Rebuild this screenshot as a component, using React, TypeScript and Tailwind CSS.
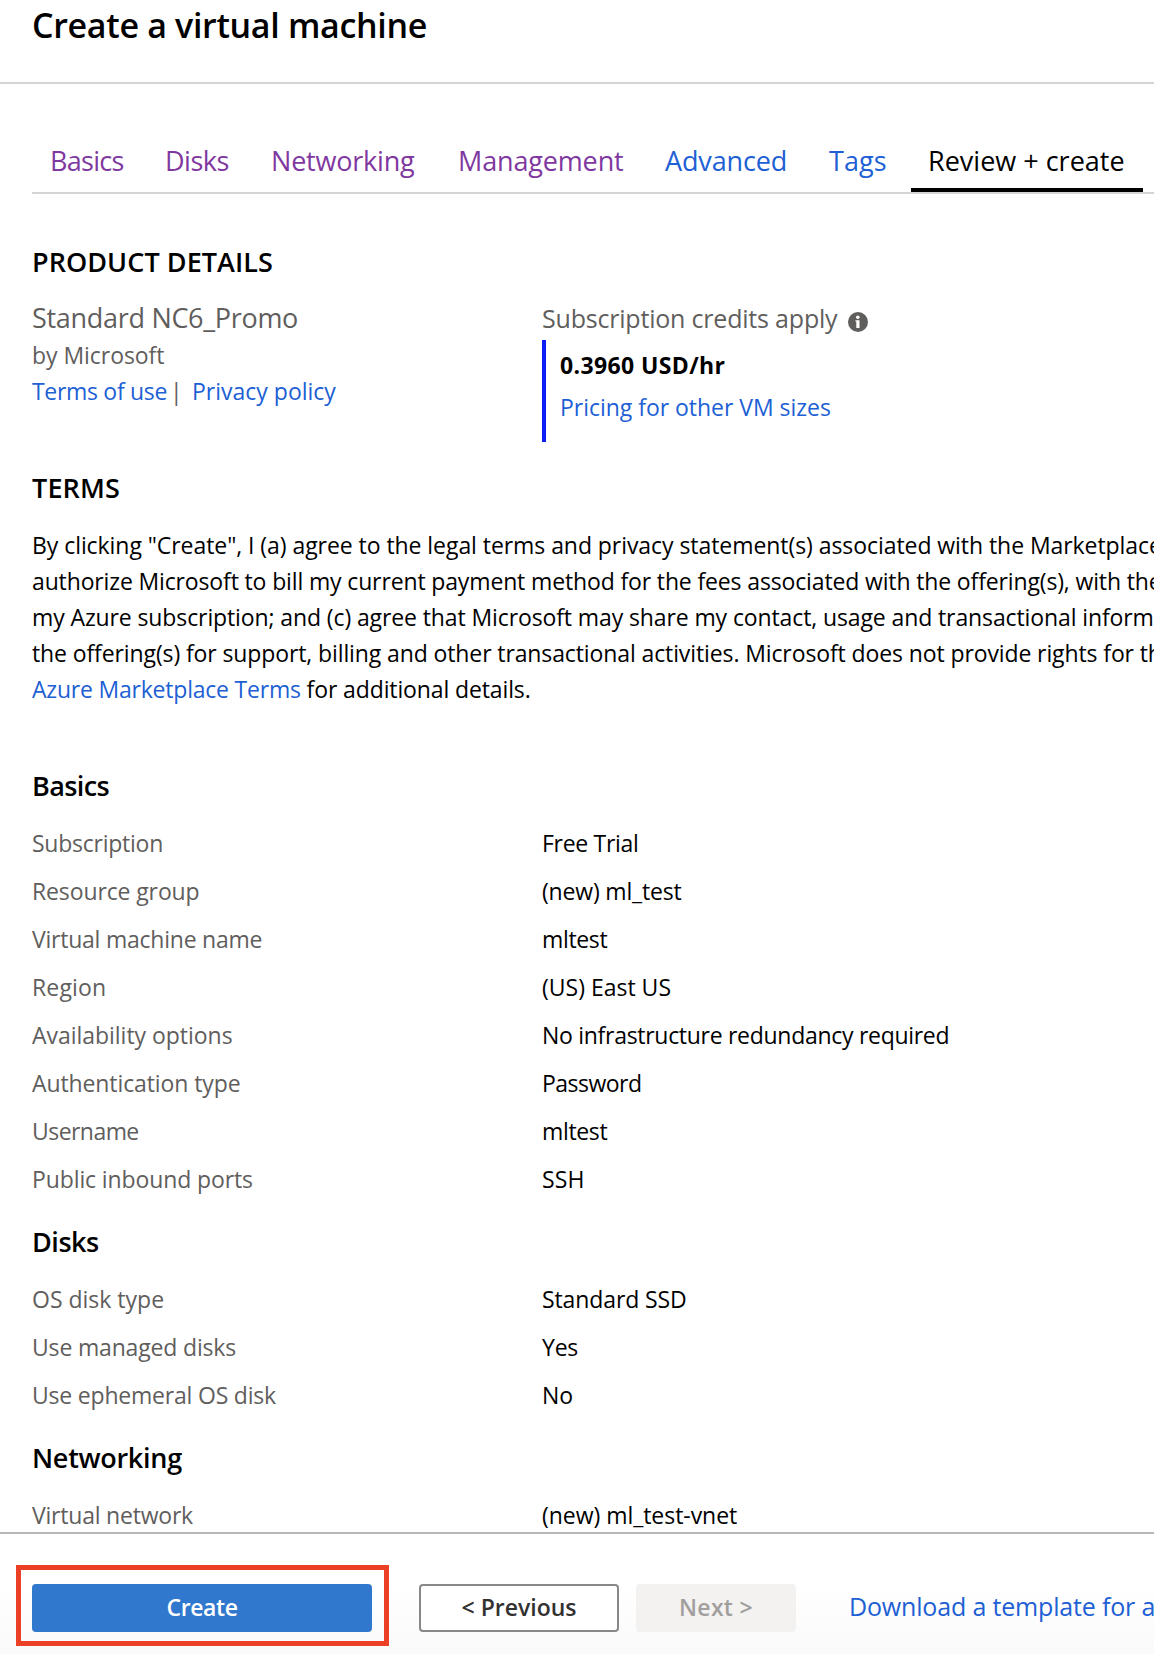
type Row = { label: string; labelClass: string; value: string; valueClass: string };
type Group = { title: string; titleClass: string; rows: Row[] };

const tabs = [
  { name: "Basics", cls: "w-[115px] tracking-[-0.7px] text-[#7f38a0]" },
  { name: "Disks", cls: "w-[106px] tracking-[-0.5px] text-[#7f38a0]" },
  { name: "Networking", cls: "w-[187px] tracking-[-0.2px] text-[#7f38a0]" },
  { name: "Management", cls: "w-[207px] tracking-[-0.15px] text-[#7f38a0]" },
  { name: "Advanced", cls: "w-[164px] tracking-[-0.15px] text-[#215fd4]" },
  { name: "Tags", cls: "w-[100px] tracking-[0.1px] text-[#215fd4]" },
];

const groups: Group[] = [
  {
    title: "Basics",
    titleClass: "mt-[61px] tracking-[-0.6px]",
    rows: [
      { label: "Subscription", labelClass: "tracking-[-0.25px]", value: "Free Trial", valueClass: "tracking-[-0.3px]" },
      { label: "Resource group", labelClass: "tracking-[-0.12px]", value: "(new) ml_test", valueClass: "tracking-[-0.18px]" },
      { label: "Virtual machine name", labelClass: "tracking-[-0.23px]", value: "mltest", valueClass: "tracking-[-0.35px]" },
      { label: "Region", labelClass: "tracking-[0.15px]", value: "(US) East US", valueClass: "tracking-normal" },
      { label: "Availability options", labelClass: "tracking-[-0.03px]", value: "No infrastructure redundancy required", valueClass: "tracking-[-0.29px]" },
      { label: "Authentication type", labelClass: "tracking-[-0.1px]", value: "Password", valueClass: "tracking-[-0.52px]" },
      { label: "Username", labelClass: "tracking-[-0.55px]", value: "mltest", valueClass: "tracking-[-0.35px]" },
      { label: "Public inbound ports", labelClass: "tracking-[-0.11px]", value: "SSH", valueClass: "tracking-[0.2px]" },
    ],
  },
  {
    title: "Disks",
    titleClass: "mt-[21px] tracking-[-0.45px]",
    rows: [
      { label: "OS disk type", labelClass: "tracking-normal", value: "Standard SSD", valueClass: "tracking-[-0.1px]" },
      { label: "Use managed disks", labelClass: "tracking-[-0.17px]", value: "Yes", valueClass: "tracking-[-0.2px]" },
      { label: "Use ephemeral OS disk", labelClass: "tracking-[-0.2px]", value: "No", valueClass: "tracking-normal" },
    ],
  },
  {
    title: "Networking",
    titleClass: "mt-[21px] tracking-[-0.28px]",
    rows: [
      { label: "Virtual network", labelClass: "tracking-[-0.21px]", value: "(new) ml_test-vnet", valueClass: "tracking-[-0.04px]" },
    ],
  },
];

function InfoIcon() {
  return (
    <svg className="mt-[8px] ml-[11px] size-5" viewBox="0 0 20 20">
      <circle cx="10" cy="10" r="10" fill="#605e5c" />
      <circle cx="9.8" cy="5.2" r="1.8" fill="#fff" />
      <path d="M7.4 8.2h4.1v7.9H8.3v-6.5h-.9z" fill="#fff" />
    </svg>
  );
}

function Details({ title, titleClass, rows }: Group) {
  return (
    <section>
      <h3 className={`text-[27px] leading-[36px] font-semibold ${titleClass}`}>{title}</h3>
      <dl className="mt-[15px]">
        {rows.map((r) => (
          <div key={r.label} className="flex h-12 leading-[48px]">
            <dt className={`w-[510px] text-[#5f5e5d] ${r.labelClass}`}>{r.label}</dt>
            <dd className={r.valueClass}>{r.value}</dd>
          </div>
        ))}
      </dl>
    </section>
  );
}

export default function App() {
  return (
    <div className="flex h-[1654px] w-[1154px] flex-col overflow-hidden bg-white font-['Open_Sans','Noto_Sans',sans-serif] text-[23px] whitespace-nowrap text-black">
      <header className="h-[84px] shrink-0 border-b-2 border-[#d4d4d4] pl-8">
        <h1 className="text-[34px] leading-[50px] font-semibold tracking-[-0.32px]">Create a virtual machine</h1>
      </header>

      <main className="min-h-0 flex-1 overflow-hidden pl-8">
        <nav className="mt-[52px] flex h-[58px] border-b-2 border-[#d4d4d4] text-[27px] leading-[49px]">
          {tabs.map((t) => (
            <a key={t.name} className={`shrink-0 pl-[18px] ${t.cls}`}>
              {t.name}
            </a>
          ))}
          <a className="h-14 w-[232px] shrink-0 border-b-4 border-black pl-[17px]">Review + create</a>
        </nav>

        <h2 className="mt-[50px] text-[27px] leading-[36px] font-semibold tracking-[0.06px]">PRODUCT DETAILS</h2>
        <div className="mt-5 flex h-[142px]">
          <div className="w-[510px] leading-[36px] text-[#5f5e5d]">
            <p className="text-[27px] tracking-[-0.3px]">Standard NC6_Promo</p>
            <p className="mt-px tracking-[-0.05px]">by Microsoft</p>
            <p className="flex">
              <a className="w-[138px] tracking-[-0.31px] text-[#215fd4]">Terms of use</a>
              <span className="w-[22px]">|</span>
              <a className="text-[#215fd4]">Privacy policy</a>
            </p>
          </div>
          <div>
            <p className="flex h-10 items-center pb-1 text-[25px] leading-[36px] tracking-[-0.2px] text-[#5f5e5d]">
              Subscription credits apply
              <InfoIcon />
            </p>
            <div className="h-[102px] border-l-4 border-[#0820f5] pt-[7px] pl-[14px] leading-[36px]">
              <p className="font-bold tracking-[0.38px]">0.3960 USD/hr</p>
              <a className="mt-[6px] block tracking-[-0.03px] text-[#215fd4]">Pricing for other VM sizes</a>
            </div>
          </div>
        </div>

        <h2 className="mt-7 text-[27px] leading-[36px] font-semibold tracking-[0.14px]">TERMS</h2>
        <div className="mt-[21px] leading-[36px]">
          <p className="tracking-[-0.06px]">By clicking "Create", I (a) agree to the legal terms and privacy statement(s) associated with the Marketplace</p>
          <p className="tracking-[-0.14px]">authorize Microsoft to bill my current payment method for the fees associated with the offering(s), with the</p>
          <p className="tracking-[-0.11px]">my Azure subscription; and (c) agree that Microsoft may share my contact, usage and transactional information</p>
          <p className="tracking-[-0.11px]">the offering(s) for support, billing and other transactional activities. Microsoft does not provide rights for third</p>
          <p className="tracking-[-0.12px]">
            <a className="tracking-[-0.21px] text-[#215fd4]">Azure Marketplace Terms</a> for additional details.
          </p>
        </div>

        {groups.map((g) => (
          <Details key={g.title} {...g} />
        ))}
      </main>

      <footer className="relative flex h-[122px] shrink-0 items-start border-t-2 border-[#b8b8b8] bg-linear-to-b from-white from-40% to-[#fafafa] pt-[50px] pl-8 leading-[46px] font-semibold">
        <button className="h-12 w-[340px] shrink-0 rounded-[4px] bg-[#3078cd] pb-0.5 tracking-[-0.41px] text-white">Create</button>
        <button className="ml-[47px] h-12 w-[200px] shrink-0 rounded-[4px] border-2 border-[#888] bg-white pb-0.5 leading-[42px] text-[#323130]">&lt; Previous</button>
        <button className="ml-[17px] h-12 w-[160px] shrink-0 rounded-[4px] bg-[#f3f2f1] pb-0.5 tracking-[0.3px] text-[#a19f9d]">Next &gt;</button>
        <a className="ml-[53px] shrink-0 text-[25px] leading-[45px] font-normal tracking-[-0.17px] text-[#215fd4]">Download a template for automation</a>
        <div className="pointer-events-none absolute top-[31px] left-4 h-[81px] w-[373px] border-[5px] border-[#ec4026]" />
      </footer>
    </div>
  );
}
